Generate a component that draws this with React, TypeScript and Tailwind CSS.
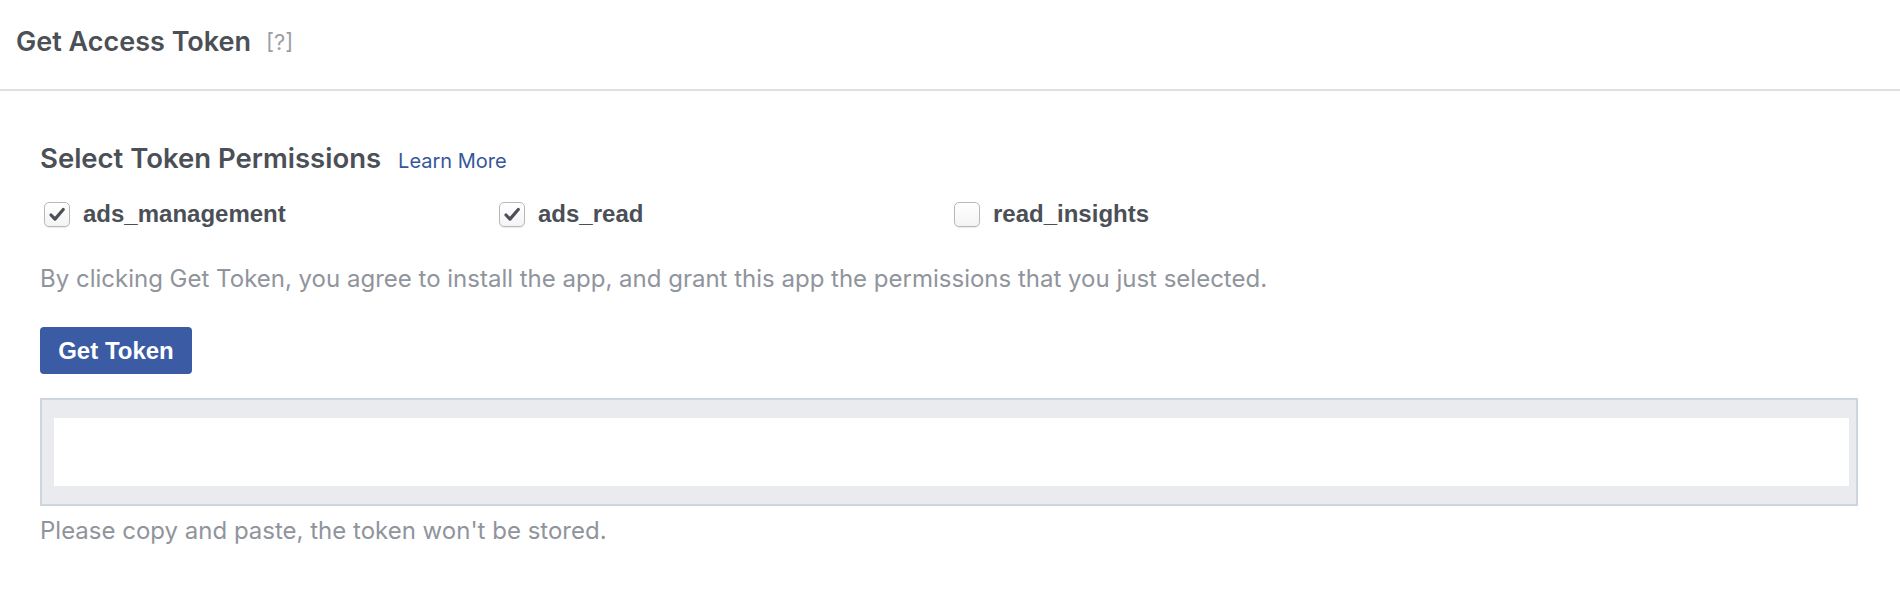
import React from "react";

function Check({ checked }: { checked: boolean }) {
  return (
    <span className="ml-[4px] flex h-[25px] w-[26px] shrink-0 items-center justify-center rounded-[5px] border border-[#b8b8b8] bg-gradient-to-b from-white to-[#f4f4f4] shadow-[0_1px_1px_rgba(0,0,0,0.08)]">
      {checked && (
        <svg width="26" height="25" viewBox="0 0 26 25">
          <path d="M6.5 13 L10.8 17.5 L19.8 7" fill="none" stroke="#4b4f56" strokeWidth="3.4" strokeLinecap="round" strokeLinejoin="round" />
        </svg>
      )}
    </span>
  );
}

function Perm({ label, checked }: { label: string; checked: boolean }) {
  return (
    <label className="flex h-[26px] items-center">
      <Check checked={checked} />
      <span className="ml-[13px] font-['Liberation_Sans',Arial,sans-serif] text-[24px] font-bold leading-[26px] text-[#4b4f56]">
        {label}
      </span>
    </label>
  );
}

export default function App() {
  return (
    <div className="min-h-[590px] w-full bg-white font-['Inter',sans-serif]">
      <div className="flex h-[91px] items-start border-b-2 border-[#dfe0e2] pl-[16px] pt-[29px]">
        <span className="text-[27px] font-semibold leading-[26px] text-[#4b4f56]">Get Access Token</span>
        <span className="ml-[15px] text-[22px] leading-[26px] text-[#9a9ea5]">[?]</span>
      </div>
      <div className="pl-[40px] pr-[42px]">
        <div className="mt-[52px] flex items-baseline leading-[30px]">
          <span className="text-[27.5px] font-semibold text-[#4b4f56]">Select Token Permissions</span>
          <a className="ml-[17px] text-[20px] text-[#365899]">Learn More</a>
        </div>
        <div className="mt-[25px] grid grid-cols-[455px_455px_455px]">
          <Perm label="ads_management" checked />
          <Perm label="ads_read" checked />
          <Perm label="read_insights" checked={false} />
        </div>
        <p className="mt-[38px] text-[24px] leading-[28px] text-[#90949c]">
          By clicking Get Token, you agree to install the app, and grant this app the permissions that you just selected.
        </p>
        <button className="mt-[34px] flex h-[47px] w-[152px] items-center justify-center rounded-[4px] bg-[#3b5ba5] font-['Liberation_Sans',Arial,sans-serif] text-[24px] font-bold text-white">
          Get Token
        </button>
        <div className="mt-[24px] h-[108px] border-2 border-[#cdd5e1] bg-[#e9ebee] pb-[18px] pl-[12px] pr-[7px] pt-[18px]">
          <div className="h-full w-full bg-white" />
        </div>
        <p className="mt-[11px] text-[24px] leading-[28px] text-[#90949c]">
          Please copy and paste, the token won't be stored.
        </p>
      </div>
    </div>
  );
}
